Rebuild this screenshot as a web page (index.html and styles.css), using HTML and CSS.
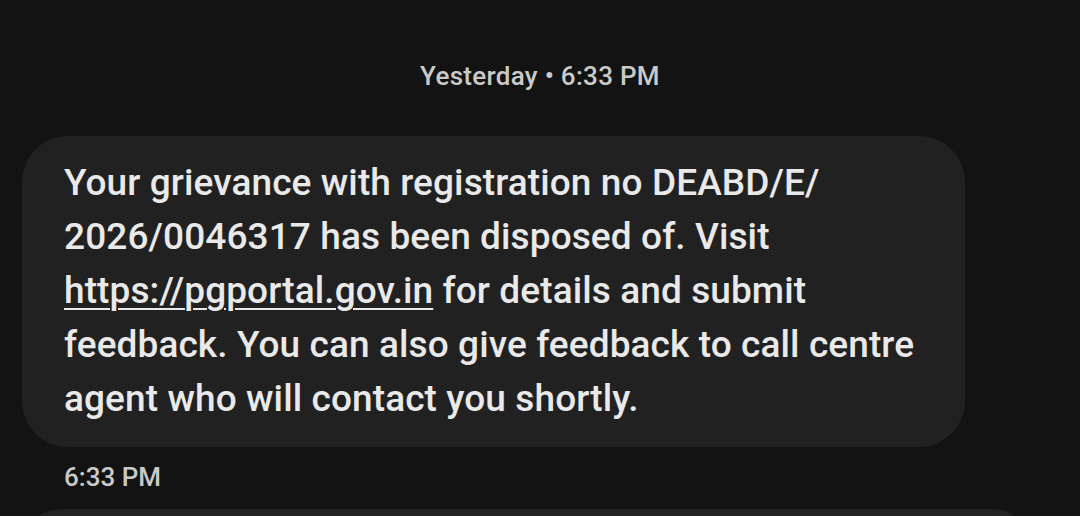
FILE: index.html
```html
<!DOCTYPE html>
<html>
<head>
<meta charset="utf-8">
<link rel="stylesheet" href="styles.css">
</head>
<body>
<div class="thread">
  <div class="date">Yesterday • 6:33 PM</div>
  <div class="bubble">
    <p class="msg">Your grievance with registration no DEABD/E/<br>2026/0046317 has been disposed of. Visit<br><span class="link">https://pgportal.gov.in</span> for details and submit<br>feedback. You can also give feedback to call centre<br>agent who will contact you shortly.</p>
  </div>
  <div class="time">6:33 PM</div>
  <div class="bubble next"></div>
</div>
</body>
</html>
```

FILE: styles.css
```css
html, body {
  margin: 0;
  padding: 0;
  background: #131313;
}
.thread {
  display: flex;
  flex-direction: column;
  font-family: Roboto, "Noto Sans", sans-serif;
  padding: 0 0 0 22px;
  height: 516px;
  box-sizing: border-box;
  overflow: hidden;
}
.date {
  align-self: center;
  margin-left: -22px;
  margin-top: 61px;
  font-size: 26px;
  font-weight: 500;
  letter-spacing: 0.3px;
  color: #cacaca;
  line-height: 30px;
}
.bubble {
  flex-shrink: 0;
  background: #212121;
  border-radius: 46px;
  width: 943px;
  box-sizing: border-box;
  padding: 20px 20px 21px 42px;
  margin-top: 45px;
}
.msg {
  margin: 0;
  font-size: 37px;
  line-height: 54px;
  font-weight: 500;
  letter-spacing: 0.1px;
  color: #e9e9e9;
  white-space: nowrap;
}
.link {
  text-decoration: underline;
  text-decoration-thickness: 2px;
  text-underline-offset: 5px;
}
.time {
  margin: 15px 0 0 42px;
  font-size: 26px;
  font-weight: 500;
  color: #cacaca;
  line-height: 30px;
}
.bubble.next {
  margin-top: 17px;
  width: 1010px;
  height: 80px;
}
```
